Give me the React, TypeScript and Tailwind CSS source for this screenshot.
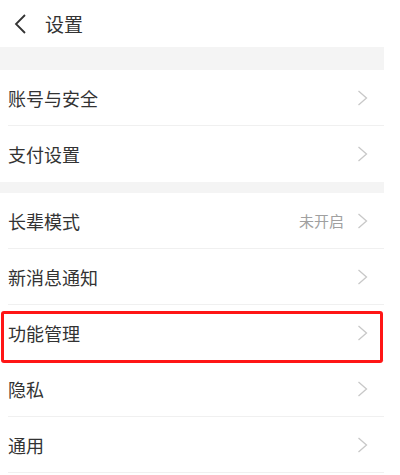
import React from "react";

const font = { fontFamily: '"Noto Sans CJK SC", "Noto Sans", sans-serif' };

function Chevron() {
  return (
    <svg width="11" height="16" viewBox="0 0 11 16" className="shrink-0">
      <path d="M1.5 1 L9.5 8 L1.5 15" fill="none" stroke="#c8c8c8" strokeWidth="1.3" strokeLinejoin="miter" />
    </svg>
  );
}

function Row({ label, value, last, highlight }: { label: string; value?: string; last?: boolean; highlight?: boolean }) {
  return (
    <div className="relative h-[56px] pl-2">
      <div className={`flex h-full items-center pr-[16px] ${last ? "" : "border-b border-[#f0f0f0]"}`}>
        <span className="flex-1 text-[18px] leading-none text-[#333333]">{label}</span>
        {value && <span className="mr-[13px] text-[15px] leading-none text-[#a0a0a0]">{value}</span>}
        <Chevron />
      </div>
      {highlight && (
        <div className="pointer-events-none absolute left-[1px] right-[1px] top-[6px] bottom-[-2px] rounded-[3px] border-[3px] border-[#ff1616]" />
      )}
    </div>
  );
}

export default function App() {
  return (
    <div className="h-[475px] w-[400px] bg-white" style={font}>
      <div className="w-[384px]">
        <div className="flex h-[47px] items-center">
          <svg width="14" height="22" viewBox="0 0 14 22" className="ml-[13px]">
            <path d="M12 2 L3 11 L12 20" fill="none" stroke="#333" strokeWidth="1.8" />
          </svg>
          <span className="ml-[18px] text-[19px] leading-none text-[#333333]">设置</span>
        </div>
        <div className="h-[23px] bg-[#f4f4f4]" />
        <Row label="账号与安全" />
        <Row label="支付设置" last />
        <div className="h-[11px] bg-[#f4f4f4]" />
        <Row label="长辈模式" value="未开启" />
        <Row label="新消息通知" />
        <Row label="功能管理" highlight />
        <Row label="隐私" />
        <Row label="通用" />
      </div>
    </div>
  );
}
